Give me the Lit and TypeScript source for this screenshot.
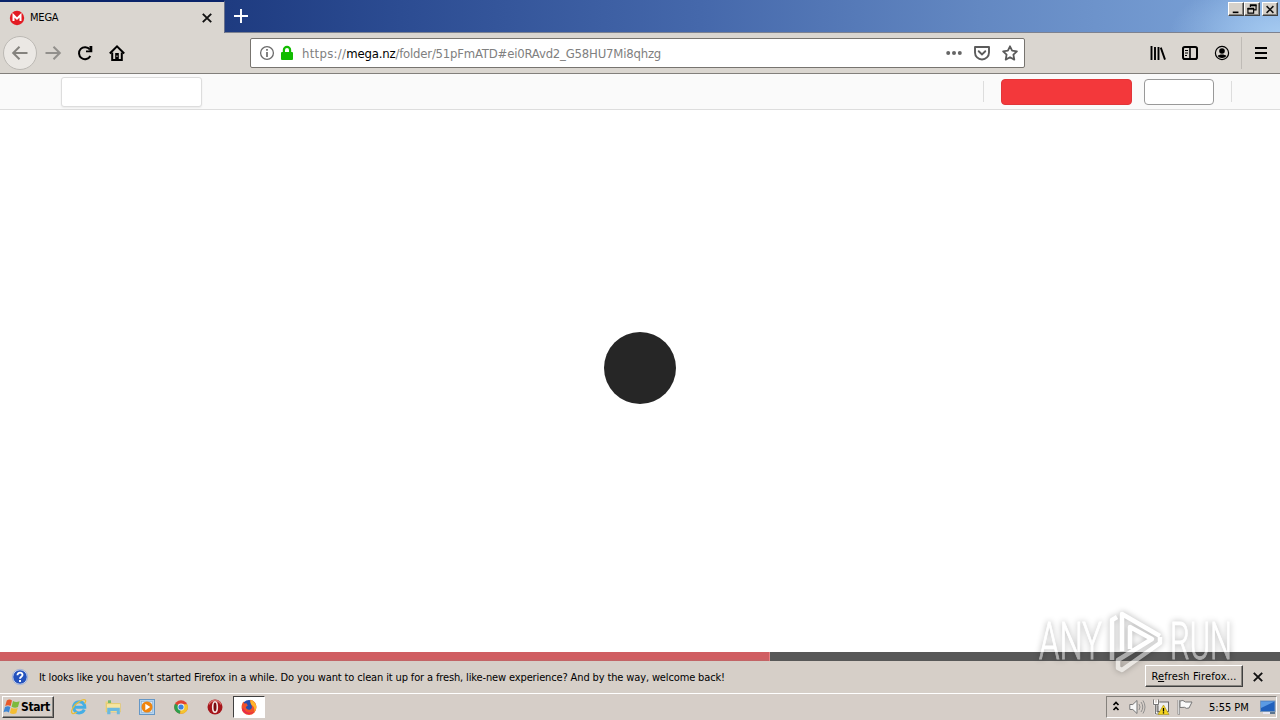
import { LitElement, html, css, svg } from "lit";
import { customElement, property } from "lit/decorators.js";

const icons: Record<string, unknown> = {
  mega: svg`<circle cx="8" cy="8" r="7.2" fill="#e31b23"/><path d="M4.5 11V5.2L8 8.6l3.5-3.4V11" fill="none" stroke="#fff" stroke-width="2"/>`,
  close: svg`<path d="M3.8 3.8l8.4 8.4M12.2 3.8l-8.4 8.4" stroke="#111" stroke-width="1.9"/>`,
  plus: svg`<path d="M8 0v16M0 8h16" stroke="#fff" stroke-width="2.2"/>`,
  back: svg`<path d="M15.5 8H1.5M7.5 1.8L1.2 8l6.3 6.2" fill="none" stroke="#85837e" stroke-width="2"/>`,
  forward: svg`<path d="M.5 8h14M8.5 1.8L14.8 8l-6.3 6.2" fill="none" stroke="#92908c" stroke-width="2"/>`,
  reload: svg`<path d="M13.3 11A6 6 0 1 1 12.8 4.5" fill="none" stroke="#000" stroke-width="2"/><path d="M15.3 1v6.3H9V5.500h3.500V1z"/>`,
  home: svg`<path d="M.8 8.5L8 1.3l7.2 7.2" fill="none" stroke="#000" stroke-width="2"/><path d="M3.2 7.5V15h9.6V7.5" fill="none" stroke="#000" stroke-width="2"/><path d="M6.2 8h3.6v7H6.2z"/><path d="M7.5 10.5h1v1.5h-1z" fill="#dad6d0"/>`,
  info: svg`<circle cx="8" cy="8" r="6.4" fill="none" stroke="#6b6b6b" stroke-width="1.3"/><path d="M8 7v5M8 4v1.8" stroke="#6b6b6b" stroke-width="1.7"/>`,
  lock: svg`<path d="M4.9 8V5a3.1 3.1 0 0 1 6.2 0v3" fill="none" stroke="#12bc00" stroke-width="2.2"/><rect x="2" y="7" width="12" height="8" rx="1" fill="#12bc00"/>`,
  dots: svg`<g fill="#666"><circle cx="2.2" cy="8" r="2"/><circle cx="8" cy="8" r="2"/><circle cx="13.8" cy="8" r="2"/></g>`,
  pocket: svg`<path d="M1 2h14v5.5a7 7 0 0 1-14 0z" fill="none" stroke="#5b5b5b" stroke-width="1.9" stroke-linejoin="round"/><path d="M4.7 6.2L8 9.4l3.3-3.2" fill="none" stroke="#5b5b5b" stroke-width="1.9" stroke-linecap="round"/>`,
  star: svg`<path d="M8 1.3l2.1 4.4 4.8.6-3.5 3.4.9 4.9L8 12.2l-4.3 2.4.9-4.9L1.1 6.3l4.8-.6z" fill="none" stroke="#5b5b5b" stroke-width="1.8" stroke-linejoin="round"/>`,
  library: svg`<path d="M1.5 1v14M5 2v13M8.500 2v13M10.800 2.600l4.200 12" fill="none" stroke="#000" stroke-width="1.9"/>`,
  sidebar: svg`<rect x="1" y="2" width="14" height="12" rx="1.8" fill="none" stroke="#000" stroke-width="2"/><path d="M8 2v12" stroke="#000" stroke-width="1.6"/><path d="M3 5.5h3M3 8h3M3 10.5h2" stroke="#000"/>`,
  account: svg`<circle cx="8" cy="8" r="6.6" fill="none" stroke="#000" stroke-width="1.2"/><circle cx="8" cy="6" r="2.8"/><path d="M3.7 11C5 9 11 9 12.3 11 11 13.600 5 13.600 3.700 11z"/>`,
  menu: svg`<path d="M2 3h12M2 8h12M2 13h12" stroke="#000" stroke-width="2"/>`,
  minimize: svg`<path d="M4 11.500h7" stroke="#000" stroke-width="2"/>`,
  restore: svg`<path d="M6 5V2.500h7v6h-3M3 7h7v5.500H3z" fill="none" stroke="#000" stroke-width="1.4"/><path d="M5.5 2.800h8M2.500 7h8" stroke="#000" stroke-width="2.200"/>`,
  help: svg`<circle cx="8" cy="8" r="7.3" fill="#2452bd" stroke="#e8edf8"/><circle cx="8" cy="8" r="7.7" fill="none" stroke="#7c94c9" stroke-width=".6"/><path d="M5.5 6.2C5.5 2.7 10.8 3 10.5 6 10.3 7.7 8 7.7 8 9.7M8 11v2" fill="none" stroke="#fff" stroke-width="1.9"/>`,
  windows: svg`<path d="M2.800 1.500Q5.500-.4 8 1.500L6.600 7Q4 5.400 1.200 7z" fill="#e8592b"/><path d="M9 2q3 1.900 6.600.2L14 7.900q-3 1.600-6.400-.2z" fill="#7dba3d"/><path d="M1 8Q4 6.500 6.300 8L4.900 13.400Q2.400 11.800-.5 13.300z" fill="#3f86d4"/><path d="M7.300 8.700q3.300 1.700 6.400.2l-1.400 5.300q-3.200 1.700-6.400-.1z" fill="#f4bd32"/>`,
  explorer: svg`<path d="M13.300 10.600A5.600 5.600 0 1 1 13.800 8.200H4" fill="none" stroke="#45aee5" stroke-width="3"/><path d="M13.4 4.4C17 .2 12.7-.2 8.8 2.3 2.8 5.4-1.3 13 1.4 14.400c1.3.7 3.6-.7 4.4-1.300" fill="none" stroke="#e8bd37" stroke-width="1.3"/>`,
  folder: svg`<path d="M.5 2.500h5.500l1 1.500h7.500V13H.5z" fill="#ecd37a"/><path d="M3 1.300h3v3H3z" fill="#79b96b"/><path d="M1.500 4.600H15.500V13h-14z" fill="#f6e5a0" stroke="#dcc067" stroke-width=".6"/><path d="M2.200 8.700h12.600v6.600h-3V12H5.500v3.300H2.200z" fill="#6bb9df"/>`,
  player: svg`<rect x=".5" y=".5" width="15" height="15" fill="#b5d4ef" stroke="#6597c6"/><rect x="2.4" y="2.4" width="11.2" height="11.2" fill="#d7e7f6" stroke="#86acd0" stroke-width=".6"/><circle cx="8" cy="8" r="5.5" fill="#ef850f"/><path d="M6.3 4.8l5 3.2-5 3.2z" fill="#fff"/>`,
  chrome: svg`<circle cx="8" cy="8" r="6.8" fill="#e04332"/><path d="M8 8L2 4.8A6.8 6.8 0 0 0 7 14.7z" fill="#2da04d"/><path d="M8 8l-1 6.700a6.8 6.8 0 0 0 7.300-9.400H8z" fill="#f4c52d"/><circle cx="8" cy="8" r="3.4" fill="#f3f3f3"/><circle cx="8" cy="8" r="2.6" fill="#3b82df"/>`,
  opera: svg`<circle cx="8" cy="8" r="7.5" fill="#a6151b"/><path d="M2 5.5a6.5 6.5 0 0 1 12 0" fill="none" stroke="#d66a68" stroke-width="1.4"/><ellipse cx="8" cy="8" rx="2.3" ry="5.2" fill="#7b0b10" stroke="#f4e7e5" stroke-width="1.6"/>`,
  firefox: svg`<circle cx="8" cy="8" r="7" fill="#274fae"/><path d="M9 1c4 0 6.700 3.800 6.400 7.500A7.400 7.400 0 0 1 .6 8.700C.4 6 1.400 3.800 2.600 2.400l.6 2 2.200-.2 1.400 2.300-2 1.600c.5 3.400 5 3.600 6 .7.600-2.600-1.500-4-1.800-7.800z" fill="#f1512b"/><path d="M9.500.7c5.500 1.300 7.800 8.300 3.800 12.300.5-3.400-.3-5.200-2-6.500-1.500-1.300-2.300-3.300-1.800-5.800z" fill="#ffb52a"/><path d="M.8 9.200c1 5.600 8.400 7.900 12.200 3.600-4.500 2-8.300.7-10.200-3z" fill="#e8294c"/>`,
  chevrons: svg`<path d="M5.500 6l2.500-2.500L10.500 6M5.500 11L8 8.500l2.500 2.500" fill="none" stroke="#000" stroke-width="1.7"/>`,
  volume: svg`<path d="M.8 5.5h3L8 1.5v13L3.8 10.5h-3z" fill="#f8f8f8" stroke="#777"/><path d="M10 5q2 3 0 6M12 3q3.5 5 0 10M14 1.5q4 6.500 0 13" fill="none" stroke="#888" stroke-width=".9"/>`,
  network: svg`<rect x="5" y="3" width="10.500" height="9.500" fill="#eee" stroke="#666"/><path d="M1 1v4h4V1M3 5v9.500h4" fill="none" stroke="#fff" stroke-width="2.400"/><path d="M.5.5v5h5v-5M2.500 6v9H7M4 6v7h3" fill="none" stroke="#555" stroke-width=".8"/><path d="M10.500 6L16 15.500H5z" fill="#f5d51e" stroke="#a38c19" stroke-width=".6"/><path d="M10.500 9v3.500M10.500 13.300v1.200" stroke="#000" stroke-width="1.300"/>`,
  flag: svg`<path d="M1.800 1v14.500" stroke="#777" stroke-width="2.400"/><path d="M1.800 1v14" stroke="#fff"/><path d="M3 2q3-1.500 5.500 1h6.500l-3 6Q9 10 7.500 8.300L3 8.500z" fill="#fafafa" stroke="#777"/>`,
  desktop: svg`<rect x=".5" y="2" width="14.500" height="10.500" fill="#2161bd" stroke="#7796bb"/><path d="M1 2.500h13.500L1 9z" fill="#5b9be4"/><path d="M3 14h7" stroke="#eef" stroke-width="1.500"/><path d="M10 14h5" stroke="#35597d" stroke-width="1.500"/>`,
};

@customElement("ui-icon")
export class UiIcon extends LitElement {
  @property() name = "";

  static styles = css`
    :host {
      display: block;
      flex: none;
      width: 16px;
      height: 16px;
    }
    svg {
      display: block;
      width: 100%;
      height: 100%;
      overflow: visible;
    }
  `;

  render() {
    return html`<svg viewBox="0 0 16 16">${icons[this.name]}</svg>`;
  }
}

@customElement("app-root")
export class AppRoot extends LitElement {
  @property({ type: Number }) progress = 770;

  static styles = css`
    :host {
      display: flex;
      flex-direction: column;
      position: relative;
      width: 1280px;
      height: 720px;
      overflow: hidden;
      background: #fff;
      color: #000;
      font: 11px "DejaVu Sans Condensed", "DejaVu Sans", sans-serif;
      font-stretch: condensed;
      white-space: nowrap;
    }
    * {
      box-sizing: border-box;
    }
    .titlebar {
      display: flex;
      flex: none;
      height: 33px;
      background:
        linear-gradient(#7d8290, #7d8290) 0 100% / 100% 1px no-repeat,
        radial-gradient(ellipse 110px 55px at 1280px 33px, #a5caf0, transparent),
        linear-gradient(90deg, #1e3b80 225px, #2c4c92 400px, #4568ab 700px, #6388c2 980px, #769dd3 1200px, #82abe0);
    }
    .tab {
      display: flex;
      align-items: center;
      width: 225px;
      padding: 0 9px 0 9px;
      border-top: 2px solid #0a246a;
      border-right: 1px solid #68708a;
      background: #dad6d0;
    }
    .tab-title {
      flex: 1;
      padding-left: 5px;
      letter-spacing: -0.2px;
    }
    .new-tab {
      width: 14px;
      height: 14px;
      margin: 9px 0 0 9px;
    }
    .window-buttons {
      display: flex;
      margin: 2px 2px 0 auto;
    }
    .window-button {
      display: flex;
      align-items: center;
      justify-content: center;
      width: 16px;
      height: 14px;
      background: #d6d1ca;
      border: 1px solid;
      border-color: #fff #404040 #404040 #fff;
      box-shadow: inset -1px -1px #888580;
    }
    .window-button ui-icon {
      width: 14px;
      height: 13px;
    }
    .window-button:last-child {
      margin-left: 2px;
    }
    .navbar {
      display: flex;
      flex: none;
      align-items: center;
      height: 41px;
      padding: 0 11px 0 3px;
      border-bottom: 1px solid #827f7b;
      background: #dad6d0;
    }
    .back {
      display: grid;
      place-items: center;
      width: 34px;
      height: 34px;
      margin-right: 8px;
      border: 1px solid #bcb9b4;
      border-radius: 50%;
      background: #ebe8e4;
    }
    .nav-icons {
      display: flex;
      gap: 16px;
    }
    .address {
      display: flex;
      align-items: center;
      width: 775px;
      height: 30px;
      margin-left: 125px;
      padding: 0 6px 0 8px;
      border: 1px solid #77746f;
      border-radius: 2px;
      background: #fff;
    }
    .address .lock {
      margin-left: 4px;
    }
    .url {
      flex: 1;
      padding-left: 7px;
      color: #808080;
      font-size: 13px;
      letter-spacing: -0.2px;
    }
    .scheme {
      letter-spacing: 0.3px;
    }
    .domain {
      color: #000;
    }
    .actions {
      display: flex;
      gap: 12px;
    }
    .tools {
      display: flex;
      gap: 16px;
      margin-left: auto;
    }
    .nav-divider {
      width: 1px;
      height: 32px;
      margin: 0 11px;
      background: #bfbbb6;
    }
    .site-header {
      display: flex;
      flex: none;
      align-items: center;
      height: 36px;
      padding: 0 48px 0 61px;
      border-bottom: 1px solid #ddd;
      background: #fafafa;
    }
    .search {
      width: 141px;
      height: 30px;
      margin-right: auto;
      border: 1px solid #ddd;
      border-radius: 3px;
      background: #fff;
      box-shadow: 0 1px 2px #0001;
    }
    .divider {
      width: 1px;
      height: 21px;
      background: #ddd;
    }
    .create {
      width: 131px;
      height: 26px;
      margin: 0 12px 0 17px;
      border: 1px solid #e13639;
      border-radius: 4px;
      background: #f3383b;
    }
    .login {
      width: 70px;
      height: 26px;
      margin-right: 17px;
      border: 1px solid #999;
      border-radius: 4px;
      background: #fff;
    }
    .content {
      display: grid;
      flex: 1;
      place-items: center;
      padding-bottom: 26px;
    }
    .spinner {
      width: 72px;
      height: 72px;
      border-radius: 50%;
      background: #262626;
    }
    .progress {
      flex: none;
      height: 9px;
      background: #585858;
    }
    .progress-fill {
      height: 100%;
      border-right: 1px solid #e58184;
      background: linear-gradient(#d05e62 75%, #bf6667);
    }
    .notice {
      display: flex;
      flex: none;
      align-items: center;
      height: 32px;
      padding: 0 14px 0 12px;
      background: #d6cfc8;
    }
    .notice-text {
      flex: 1;
      padding-left: 11px;
      letter-spacing: -0.135px;
    }
    .refresh {
      width: 98px;
      height: 22px;
      margin: 0 7px 3px 0;
      padding: 2px 0 0;
      border: 1px solid;
      border-color: #fff #404040 #404040 #fff;
      box-shadow: inset -1px -1px #888580;
      background: #d6cfc8;
      color: #000;
      font: inherit;
      letter-spacing: 0.15px;
    }
    .taskbar {
      display: flex;
      flex: none;
      align-items: center;
      height: 27px;
      padding: 0 3px 0 2px;
      border-top: 1px solid #fff;
      background: #d6cec8;
    }
    .start {
      display: flex;
      align-items: center;
      gap: 1px;
      width: 52px;
      height: 22px;
      padding-left: 1px;
      border: 1px solid;
      border-color: #fff #404040 #404040 #fff;
      box-shadow: inset -1px -1px #888580;
      font-size: 12px;
      font-weight: bold;
      letter-spacing: -0.4px;
    }
    .launchers {
      display: flex;
      gap: 18px;
      margin-left: 17px;
    }
    .running {
      display: grid;
      place-items: center;
      width: 32px;
      height: 22px;
      margin-left: 10px;
      border: 1px solid;
      border-color: #404040 #fff #fff #404040;
      background: #fff;
    }
    .tray {
      display: flex;
      align-items: center;
      width: 171px;
      height: 22px;
      margin-left: auto;
      padding-left: 1px;
      border: 1px solid;
      border-color: #85817c #fff #fff #85817c;
    }
    .status {
      display: flex;
      gap: 8px;
      margin-left: 5px;
    }
    .clock {
      margin: 0 auto 0 16px;
      letter-spacing: 0;
    }
    .watermark {
      position: absolute;
      left: 1032px;
      top: 604px;
      width: 208px;
      height: 75px;
      overflow: visible;
      opacity: 0.5;
      filter: drop-shadow(0 0 3px #0009);
    }
    .watermark text {
      fill: #fff;
      stroke: #fff;
      stroke-width: 1px;
      font: 300 51px Roboto, sans-serif;
    }
  `;

  render() {
    return html`
      <div class="titlebar">
        <div class="tab">
          <ui-icon name="mega"></ui-icon>
          <span class="tab-title">MEGA</span>
          <ui-icon name="close"></ui-icon>
        </div>
        <ui-icon class="new-tab" name="plus"></ui-icon>
        <div class="window-buttons">
          ${["minimize", "restore", "close"].map(
            (name) => html`<span class="window-button"><ui-icon name=${name}></ui-icon></span>`
          )}
        </div>
      </div>
      <div class="navbar">
        <span class="back"><ui-icon name="back"></ui-icon></span>
        <div class="nav-icons">
          <ui-icon name="forward"></ui-icon>
          <ui-icon name="reload"></ui-icon>
          <ui-icon name="home"></ui-icon>
        </div>
        <div class="address">
          <ui-icon name="info"></ui-icon>
          <ui-icon class="lock" name="lock"></ui-icon>
          <span class="url"><span class="scheme">https://</span><span class="domain">mega.nz</span>/folder/51pFmATD#ei0RAvd2_G58HU7Mi8qhzg</span>
          <div class="actions">
            <ui-icon name="dots"></ui-icon>
            <ui-icon name="pocket"></ui-icon>
            <ui-icon name="star"></ui-icon>
          </div>
        </div>
        <div class="tools">
          <ui-icon name="library"></ui-icon>
          <ui-icon name="sidebar"></ui-icon>
          <ui-icon name="account"></ui-icon>
        </div>
        <span class="nav-divider"></span>
        <ui-icon name="menu"></ui-icon>
      </div>
      <div class="site-header">
        <span class="search"></span>
        <span class="divider"></span>
        <span class="create"></span>
        <span class="login"></span>
        <span class="divider"></span>
      </div>
      <div class="content"><div class="spinner"></div></div>
      <div class="progress">
        <div class="progress-fill" style="width: ${this.progress}px"></div>
      </div>
      <div class="notice">
        <ui-icon name="help"></ui-icon>
        <span class="notice-text">It looks like you haven’t started Firefox in a while. Do you want to clean it up for a fresh, like-new experience? And by the way, welcome back!</span>
        <button class="refresh">R<u>e</u>fresh Firefox...</button>
        <ui-icon name="close"></ui-icon>
      </div>
      <div class="taskbar">
        <div class="start"><ui-icon name="windows"></ui-icon>Start</div>
        <div class="launchers">
          ${["explorer", "folder", "player", "chrome", "opera"].map(
            (name) => html`<ui-icon name=${name}></ui-icon>`
          )}
        </div>
        <span class="running"><ui-icon name="firefox"></ui-icon></span>
        <div class="tray">
          <ui-icon name="chevrons"></ui-icon>
          <div class="status">
            <ui-icon name="volume"></ui-icon>
            <ui-icon name="network"></ui-icon>
            <ui-icon name="flag"></ui-icon>
          </div>
          <span class="clock">5:55 PM</span>
          <ui-icon name="desktop"></ui-icon>
        </div>
      </div>
      <svg class="watermark" viewBox="0 0 208 75">
        <text x="7" y="55" textLength="63" lengthAdjust="spacingAndGlyphs">ANY</text>
        <text x="138" y="55" textLength="62" lengthAdjust="spacingAndGlyphs">RUN</text>
        <path d="M85 13l-5 3v40M90 47V10l38 22M98 45V23l22 12-34 21v8l4 2 38-27v-6" fill="none" stroke="#fff" stroke-width="4.5" stroke-linejoin="round" />
      </svg>
    `;
  }
}
